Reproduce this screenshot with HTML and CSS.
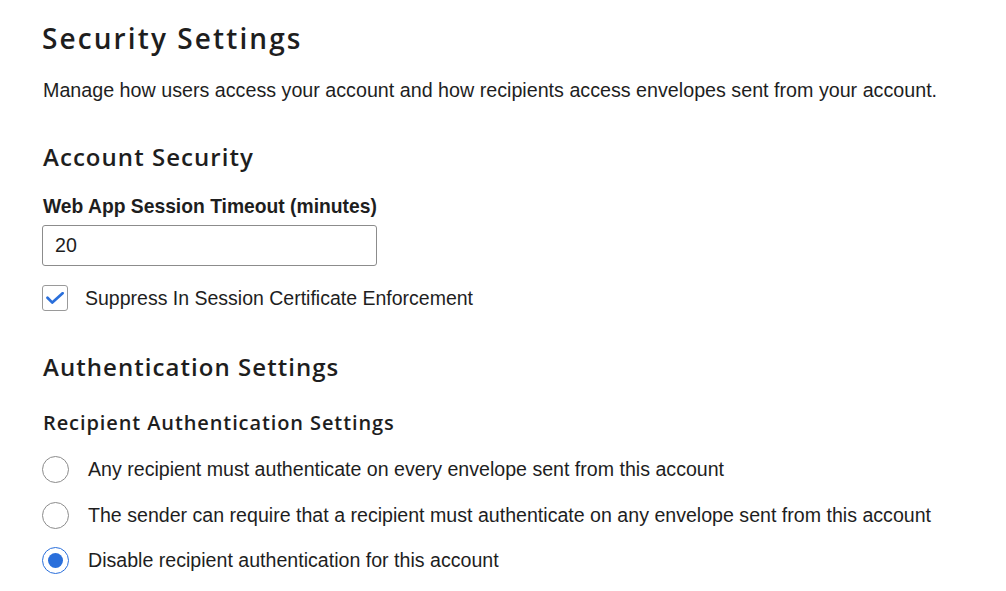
FILE: index.html
```html
<!DOCTYPE html>
<html>
<head>
<meta charset="utf-8">
<link rel="stylesheet" href="styles.css">
</head>
<body>
<main class="page">
  <h1 class="title">Security Settings</h1>
  <p class="desc">Manage how users access your account and how recipients access envelopes sent from your account.</p>

  <h2 class="section">Account Security</h2>
  <label class="field-label">Web App Session Timeout (minutes)</label>
  <div class="input">20</div>
  <div class="check-row">
    <span class="checkbox">
      <svg width="18" height="12" viewBox="0 0 18 12"><path d="M1.5 5.8 L6.3 10.6 L16.6 1.2" fill="none" stroke="#2a6fdb" stroke-width="2.7" stroke-linecap="round" stroke-linejoin="round"/></svg>
    </span>
    <span class="check-text">Suppress In Session Certificate Enforcement</span>
  </div>

  <h2 class="section section-auth">Authentication Settings</h2>
  <h3 class="subsection">Recipient Authentication Settings</h3>
  <div class="radios">
    <div class="radio-row"><span class="radio"></span><span class="radio-text">Any recipient must authenticate on every envelope sent from this account</span></div>
    <div class="radio-row"><span class="radio"></span><span class="radio-text">The sender can require that a recipient must authenticate on any envelope sent from this account</span></div>
    <div class="radio-row"><span class="radio radio-on"></span><span class="radio-text">Disable recipient authentication for this account</span></div>
  </div>
</main>
</body>
</html>
```
FILE: styles.css
```css
* { box-sizing: border-box; }
html, body { margin: 0; padding: 0; background: #fff; }
body { font-family: "Liberation Sans", Arial, sans-serif; color: #1e1e1e; }
.page { padding: 14px 0 0 42px; display: flex; flex-direction: column; align-items: flex-start; }
.title {
  font-family: "Open Sans", sans-serif; font-weight: 600; font-size: 28px;
  margin: 0; line-height: 48px; letter-spacing: 2.1px; color: #1e1e1e;
}
.desc { margin: 16px 0 0 1px; font-size: 19.7px; line-height: 24px; }
.section {
  font-family: "Open Sans", sans-serif; font-weight: 600; font-size: 24px;
  margin: 38px 0 0 1px; line-height: 34px; letter-spacing: 1.05px;
}
.field-label { display: block; margin: 21px 0 0 1px; font-weight: bold; font-size: 19.3px; line-height: 24px; }
.input {
  margin-top: 6px; width: 335px; height: 41px; border: 1px solid #8c8c8c; border-radius: 3px;
  padding: 0 12px; font-size: 19.6px; line-height: 39px;
}
.check-row { display: flex; align-items: center; margin-top: 19px; }
.checkbox {
  width: 26px; height: 26px; border: 1px solid #9a9a9a; border-radius: 3px;
  display: flex; align-items: center; justify-content: center; flex: none;
}
.check-text { margin-left: 17px; font-size: 19.5px; line-height: 24px; }
.section-auth { margin-top: 39px; }
.subsection {
  font-family: "Open Sans", sans-serif; font-weight: 600; font-size: 20px;
  margin: 25px 0 0 1px; line-height: 28px; letter-spacing: 0.9px;
}
.radios { display: flex; flex-direction: column; gap: 18.5px; margin-top: 19px; }
.radio-row { display: flex; align-items: center; height: 27px; }
.radio {
  width: 27px; height: 27px; border: 1.2px solid #8c8c8c; border-radius: 50%;
  display: flex; align-items: center; justify-content: center; flex: none;
}
.radio-on { border: 1.5px solid #2a6fdb; }
.radio-on::after { content: ""; width: 15px; height: 15px; border-radius: 50%; background: #2a6fdb; }
.radio-text { margin-left: 19px; font-size: 19.6px; line-height: 27px; }
```
